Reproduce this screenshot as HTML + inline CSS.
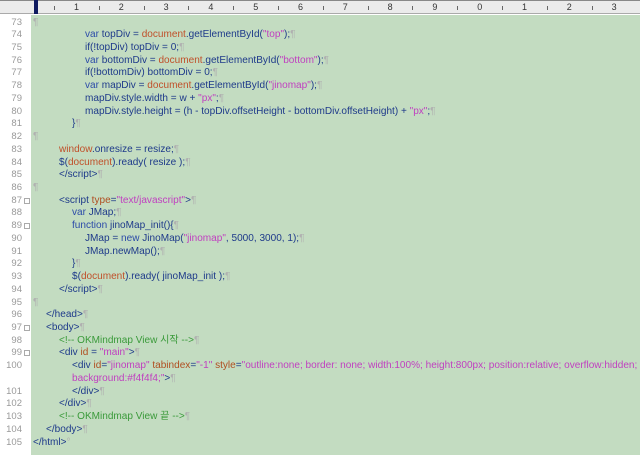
<!DOCTYPE html>
<html><head><meta charset="utf-8"><style>
body{margin:0;width:640px;height:455px;overflow:hidden;background:#fff;font-family:"Liberation Sans","Noto Sans CJK KR",sans-serif;font-size:10.05px;position:relative}
#ruler{position:absolute;left:0;top:0;width:640px;height:14px;background:#ebebeb;border-top:1px solid #888;border-bottom:1px solid #aaa;box-sizing:border-box}
#ruler .n{position:absolute;top:1px;font-size:9px;color:#333}
#ruler .t{position:absolute;top:5px;width:1px;height:4px;background:#666}
#mk{position:absolute;left:34px;top:0;width:4px;height:14px;background:#101a60}
#gut{position:absolute;left:0;top:15px;width:31px;height:440px;background:#fff;border-right:1px solid #ddd}
#code{position:absolute;left:31px;top:15px;width:609px;height:440px;background:#c3dcc1}
.r{position:absolute;height:13px;line-height:13px;white-space:pre}
.ln{position:absolute;width:22px;text-align:right;color:#999;font-size:9.5px;line-height:13px;height:13px}
.fb{position:absolute;left:24px;width:4px;height:4px;border:1px solid #aaa;background:#fff}
.k{color:#2b4aa8}.t1{color:#1e3a8a}.d{color:#c0502a}.s{color:#c040c0}.c{color:#3a9a3a}.p{color:#b0b0b0}.a{color:#b04e20}
</style></head><body>
<div id="ruler"></div><div id="mk"></div>
<div id="gut"></div><div id="code"></div>
<div id="out"></div>
<script>
var R=document.getElementById('ruler');
var nums=['1','2','3','4','5','6','7','8','9','0','1','2','3'];
for(var i=0;i<13;i++){var x=76+i*44.8;var s=document.createElement('span');s.className='n';s.style.left=(x-2)+'px';s.textContent=nums[i];R.appendChild(s);
var t=document.createElement('span');t.className='t';t.style.left=(x-22)+'px';R.appendChild(t);}
</script>
<script>
var P='<span class="p">¶</span>';
var rows=[
[73,0,P],
[74,4,'<span class="k">var</span> <span class="t1">topDiv = </span><span class="d">document</span><span class="t1">.getElementById(</span><span class="s">"top"</span><span class="t1">);</span>'+P],
[75,4,'<span class="t1">if(!topDiv) topDiv = 0;</span>'+P],
[76,4,'<span class="k">var</span> <span class="t1">bottomDiv = </span><span class="d">document</span><span class="t1">.getElementById(</span><span class="s">"bottom"</span><span class="t1">);</span>'+P],
[77,4,'<span class="t1">if(!bottomDiv) bottomDiv = 0;</span>'+P],
[78,4,'<span class="k">var</span> <span class="t1">mapDiv = </span><span class="d">document</span><span class="t1">.getElementById(</span><span class="s">"jinomap"</span><span class="t1">);</span>'+P],
[79,4,'<span class="t1">mapDiv.style.width = w + </span><span class="s">"px"</span><span class="t1">;</span>'+P],
[80,4,'<span class="t1">mapDiv.style.height = (h - topDiv.offsetHeight - bottomDiv.offsetHeight) + </span><span class="s">"px"</span><span class="t1">;</span>'+P],
[81,3,'<span class="t1">}</span>'+P],
[82,0,P],
[83,2,'<span class="d">window</span><span class="t1">.onresize = resize;</span>'+P],
[84,2,'<span class="t1">$(</span><span class="d">document</span><span class="t1">).ready( resize );</span>'+P],
[85,2,'<span class="t1">&lt;/script&gt;</span>'+P],
[86,0,P],
[87,2,'<span class="t1">&lt;script </span><span class="a">type</span><span class="t1">=</span><span class="s">"text/javascript"</span><span class="t1">&gt;</span>'+P,1],
[88,3,'<span class="k">var</span> <span class="t1">JMap;</span>'+P],
[89,3,'<span class="k">function</span> <span class="t1">jinoMap_init(){</span>'+P,1],
[90,4,'<span class="t1">JMap = </span><span class="k">new</span> <span class="t1">JinoMap(</span><span class="s">"jinomap"</span><span class="t1">, 5000, 3000, 1);</span>'+P],
[91,4,'<span class="t1">JMap.newMap();</span>'+P],
[92,3,'<span class="t1">}</span>'+P],
[93,3,'<span class="t1">$(</span><span class="d">document</span><span class="t1">).ready( jinoMap_init );</span>'+P],
[94,2,'<span class="t1">&lt;/script&gt;</span>'+P],
[95,0,P],
[96,1,'<span class="t1">&lt;/head&gt;</span>'+P],
[97,1,'<span class="t1">&lt;body&gt;</span>'+P,1],
[98,2,'<span class="c">&lt;!-- OKMindmap View 시작 --&gt;</span>'+P],
[99,2,'<span class="t1">&lt;div </span><span class="a">id</span><span class="t1"> = </span><span class="s">"main"</span><span class="t1">&gt;</span>'+P,1],
[100,3,'<span class="t1">&lt;div </span><span class="a">id</span><span class="t1">=</span><span class="s">"jinomap"</span> <span class="a">tabindex</span><span class="t1">=</span><span class="s">"-1"</span> <span class="a">style</span><span class="t1">=</span><span class="s">"outline:none; border: none; width:100%; height:800px; position:relative; overflow:hidden;</span>'],
[0,3,'<span class="s">background:#f4f4f4;"</span><span class="t1">&gt;</span>'+P],
[101,3,'<span class="t1">&lt;/div&gt;</span>'+P],
[102,2,'<span class="t1">&lt;/div&gt;</span>'+P],
[103,2,'<span class="c">&lt;!-- OKMindmap View 끝 --&gt;</span>'+P],
[104,1,'<span class="t1">&lt;/body&gt;</span>'+P],
[105,0,'<span class="t1">&lt;/html&gt;</span><span class="p">°</span>']
];
var h='';
for(var i=0;i<rows.length;i++){var r=rows[i];var y=15.5+i*12.73;
if(r[0])h+='<div class="ln" style="top:'+y+'px">'+r[0]+'</div>';
if(r[3])h+='<div class="fb" style="top:'+(y+4)+'px"></div>';
h+='<div class="r" style="top:'+y+'px;left:'+(33+r[1]*13)+'px">'+r[2]+'</div>';}
document.getElementById('out').innerHTML=h;
</script>
</body></html>
